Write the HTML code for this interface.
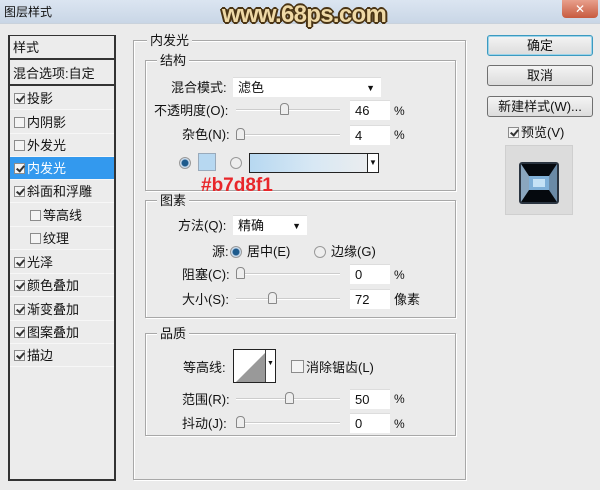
<!DOCTYPE html>
<html><head><meta charset="utf-8"><style>
*{box-sizing:border-box;margin:0;padding:0}
body{width:600px;height:490px;background:#ebebeb;font-family:"Liberation Sans","Noto Sans CJK SC",sans-serif;font-size:13px;color:#111;position:relative;overflow:hidden}
.a{position:absolute;white-space:nowrap;line-height:16px}
.title{left:0;top:0;width:600px;height:24px;background:linear-gradient(#dbe5f1,#c9d6e6);border-bottom:1px solid #c9d2dc}
.close{left:562px;top:0;width:36px;height:18px;background:linear-gradient(#e8a08c,#c75a3f);border-radius:0 0 4px 4px;color:#fff;text-align:center;font-size:12px;line-height:18px}
.wm{left:222px;top:2px;font:bold 24px "Liberation Sans",sans-serif;line-height:26px;color:#efd9a6;letter-spacing:-0.7px;text-shadow:-2px 0 #4a3414,2px 0 #4a3414,0 -2px #4a3414,0 2px #4a3414,-1px -1px #4a3414,1px 1px #4a3414,-1px 1px #4a3414,1px -1px #4a3414}
.left{left:8px;top:35px;width:108px;height:446px;border:2px solid #333;border-top-width:1px;background:#ececec}
.row{position:absolute;left:0;width:104px;height:23px;line-height:23px;border-bottom:1px solid #f7f7f7;font-size:13px}
.cb{display:inline-block;width:11px;height:11px;border:1px solid #8c8c8c;background:#f4f4f4;vertical-align:-1px;margin-right:2px;position:relative}
.cb.on::after{content:"";position:absolute;left:3px;top:0px;width:3px;height:6px;border:solid #333;border-width:0 2px 2px 0;transform:rotate(40deg)}
.box{position:absolute;border:1px solid #a8a8a8;box-shadow:1px 1px 0 #fff inset,1px 1px 0 #fff}
.lg{position:absolute;background:#ebebeb;padding:0 3px;font-size:13px;line-height:18px}
.inp{position:absolute;background:#fff;height:20px;line-height:20px;padding-left:5px;border-top:1px solid #ddd}
.sl{position:absolute;height:2px;background:#ccc;border-bottom:1px solid #fff}
.th{position:absolute;width:9px;height:12px;border:1px solid #888;border-radius:4px 4px 1px 1px;background:#eee;top:-6px}
.btn{position:absolute;left:487px;width:106px;height:21px;border:1px solid #707070;border-radius:3px;background:linear-gradient(#f4f4f4,#dcdcdc);text-align:center;line-height:19px;font-size:13px}
.rad{position:absolute;width:12px;height:12px;border-radius:50%;border:1px solid #999;background:#eee}
.rad.on{background:radial-gradient(circle,#1d5a8c 0 3px,#cde 4px)}
</style></head><body>
<div class="a title"></div>
<div class="a" style="left:4px;top:4px;font-size:12px">图层样式</div>
<div class="a wm">www.68ps.com</div>
<div class="a close">✕</div>

<div class="a left">
 <div class="row" style="top:0;height:24px;border-bottom:2px solid #333;padding-left:3px">样式</div>
 <div class="row" style="top:26px;height:24px;border-bottom:2px solid #333;padding-left:3px">混合选项:自定</div>
 <div class="row" style="top:51px;padding-left:4px"><span class="cb on"></span>投影</div>
 <div class="row" style="top:75px;padding-left:4px"><span class="cb"></span>内阴影</div>
 <div class="row" style="top:98px;padding-left:4px"><span class="cb"></span>外发光</div>
 <div class="row" style="top:121px;padding-left:4px;background:#3399ee;color:#fff"><span class="cb on"></span>内发光</div>
 <div class="row" style="top:144px;padding-left:4px"><span class="cb on"></span>斜面和浮雕</div>
 <div class="row" style="top:168px;padding-left:20px"><span class="cb"></span>等高线</div>
 <div class="row" style="top:191px;padding-left:20px"><span class="cb"></span>纹理</div>
 <div class="row" style="top:215px;padding-left:4px"><span class="cb on"></span>光泽</div>
 <div class="row" style="top:238px;padding-left:4px"><span class="cb on"></span>颜色叠加</div>
 <div class="row" style="top:262px;padding-left:4px"><span class="cb on"></span>渐变叠加</div>
 <div class="row" style="top:285px;padding-left:4px"><span class="cb on"></span>图案叠加</div>
 <div class="row" style="top:308px;padding-left:4px"><span class="cb on"></span>描边</div>
</div>

<div class="box" style="left:133px;top:40px;width:333px;height:440px"></div>
<div class="lg" style="left:147px;top:32px">内发光</div>

<div class="box" style="left:145px;top:60px;width:311px;height:131px"></div>
<div class="lg" style="left:157px;top:52px">结构</div>
<div class="a" style="left:171px;top:80px">混合模式:</div>
<div class="inp" style="left:233px;top:77px;width:148px">滤色<span style="position:absolute;right:6px;top:0;font-size:9px">▼</span></div>
<div class="a" style="left:154px;top:103px">不透明度(O):</div>
<div class="sl" style="left:236px;top:109px;width:104px"><div class="th" style="left:44px"></div></div>
<div class="inp" style="left:350px;top:100px;width:40px">46</div>
<div class="a" style="left:394px;top:103px;font-size:12px">%</div>
<div class="a" style="left:182px;top:127px">杂色(N):</div>
<div class="sl" style="left:236px;top:134px;width:104px"><div class="th" style="left:0"></div></div>
<div class="inp" style="left:350px;top:125px;width:40px">4</div>
<div class="a" style="left:394px;top:127px;font-size:12px">%</div>
<div class="rad on" style="left:179px;top:157px"></div>
<div class="a" style="left:198px;top:153px;width:18px;height:18px;background:#b7d8f1;border:1px solid #9ab"></div>
<div class="rad" style="left:230px;top:157px"></div>
<div class="a" style="left:249px;top:153px;width:130px;height:20px;border:1px solid #222;background:linear-gradient(90deg,#b7d8f1,#d8e8f4 50%,#eee)"><span style="position:absolute;right:0;top:0;width:11px;height:18px;background:#fff;border-left:1px solid #222;font-size:8px;text-align:center;line-height:18px">▼</span></div>
<div class="a" style="left:201px;top:176px;font:bold 19px 'Liberation Sans',sans-serif;line-height:20px;color:#e8262a">#b7d8f1</div>

<div class="box" style="left:145px;top:200px;width:311px;height:118px"></div>
<div class="lg" style="left:157px;top:192px">图素</div>
<div class="a" style="left:178px;top:218px">方法(Q):</div>
<div class="inp" style="left:233px;top:215px;width:74px">精确<span style="position:absolute;right:6px;top:0;font-size:9px">▼</span></div>
<div class="a" style="left:212px;top:244px">源:</div>
<div class="rad on" style="left:230px;top:246px"></div>
<div class="a" style="left:247px;top:244px">居中(E)</div>
<div class="rad" style="left:314px;top:246px"></div>
<div class="a" style="left:331px;top:244px">边缘(G)</div>
<div class="a" style="left:182px;top:267px">阻塞(C):</div>
<div class="sl" style="left:236px;top:273px;width:104px"><div class="th" style="left:0"></div></div>
<div class="inp" style="left:350px;top:264px;width:40px">0</div>
<div class="a" style="left:394px;top:267px;font-size:12px">%</div>
<div class="a" style="left:182px;top:292px">大小(S):</div>
<div class="sl" style="left:236px;top:298px;width:104px"><div class="th" style="left:32px"></div></div>
<div class="inp" style="left:350px;top:289px;width:40px">72</div>
<div class="a" style="left:394px;top:292px">像素</div>

<div class="box" style="left:145px;top:333px;width:311px;height:103px"></div>
<div class="lg" style="left:157px;top:325px">品质</div>
<div class="a" style="left:183px;top:360px">等高线:</div>
<div class="a" style="left:233px;top:349px;width:43px;height:34px;border:1px solid #222;background:#fff">
<svg width="32" height="32" style="position:absolute;left:0;top:0"><polygon points="2,32 32,32 32,2" fill="#999"/></svg>
<span style="position:absolute;right:0;top:0;width:10px;height:32px;border-left:1px solid #444;font-size:7px;text-align:center;line-height:28px">▼</span></div>
<div class="a" style="left:291px;top:360px"><span class="cb" style="width:13px;height:13px"></span>消除锯齿(L)</div>
<div class="a" style="left:182px;top:392px">范围(R):</div>
<div class="sl" style="left:236px;top:398px;width:104px"><div class="th" style="left:49px"></div></div>
<div class="inp" style="left:350px;top:389px;width:40px">50</div>
<div class="a" style="left:394px;top:391px;font-size:12px">%</div>
<div class="a" style="left:182px;top:416px">抖动(J):</div>
<div class="sl" style="left:236px;top:422px;width:104px"><div class="th" style="left:0"></div></div>
<div class="inp" style="left:350px;top:413px;width:40px">0</div>
<div class="a" style="left:394px;top:416px;font-size:12px">%</div>

<div class="btn" style="top:35px;border-color:#3c9ac0;box-shadow:0 0 0 1px #9cd4ea inset">确定</div>
<div class="btn" style="top:65px">取消</div>
<div class="btn" style="top:96px">新建样式(W)...</div>
<div class="a" style="left:508px;top:125px"><span class="cb on"></span>预览(V)</div>
<div class="a" style="left:505px;top:145px;width:68px;height:70px;background:#dcdcdc;border:1px solid #cfcfcf">
<svg width="68" height="70" style="position:absolute;left:0;top:0">
<rect x="13" y="16" width="40" height="42" rx="3" fill="#2a3440"/>
<polygon points="15,18 51,18 43,30 23,30" fill="#05090e"/>
<polygon points="15,56 51,56 43,44 23,44" fill="#05090e"/>
<polygon points="15,18 23,30 23,44 15,56" fill="#8aa6be"/>
<polygon points="51,18 43,30 43,44 51,56" fill="#6a8aa6"/>
<rect x="23" y="30" width="20" height="14" fill="#7fb0d8"/>
<rect x="27" y="33" width="12" height="8" fill="#c5e2f6"/>
</svg></div>
</body></html>
